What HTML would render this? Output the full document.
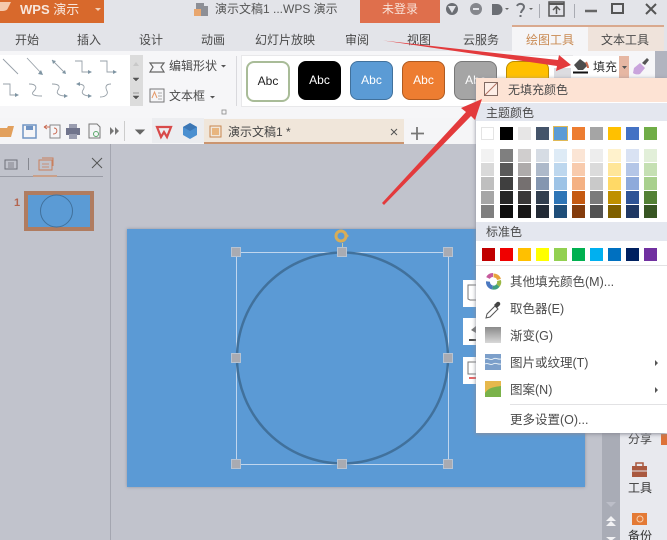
<!DOCTYPE html>
<html><head><meta charset="utf-8"><style>
html,body{margin:0;padding:0}
body{width:667px;height:540px;overflow:hidden;position:relative;background:#c1c3cc;font-family:"Liberation Sans","Noto Sans CJK SC",sans-serif;color:#444}
#w{position:absolute;left:0;top:0;width:667px;height:540px;overflow:hidden;filter:blur(.35px)}
div,span{position:absolute;white-space:nowrap}
.t{font-size:12px;line-height:16px;color:#4a4a4a}
.abc{top:61px;width:41px;height:37px;border-radius:8px;border:1px solid;text-align:center;line-height:37px;font-size:12px;color:#fff}
.m{left:510px;font-size:12.5px;line-height:16px;color:#4c4c4c}
.s{width:13px;height:13px}
svg{position:absolute;left:0;top:0}
</style></head><body><div id="w">
<div style="left:0;top:0;width:667px;height:51px;background:#e3e4e9"></div>
<div style="left:0;top:0;width:104px;height:23px;background:#d8692c"></div>
<div style="top:0;font-size:13px;line-height:19px;color:#f7e6dc;left:20px;font-weight:bold">WPS <span style="position:static;font-weight:normal">演示</span></div>
<div style="left:95px;top:8px;border:3px solid transparent;border-top:3px solid #f3d0b8"></div>
<div class="t" style="left:215px;top:1px;font-size:12px;color:#555">演示文稿1 ...WPS 演示</div>
<div style="left:360px;top:0;width:80px;height:23px;background:#df6f4c;color:#f8e2d8;font-size:12px;line-height:18px;text-align:center">未登录</div>
<!-- tabs -->
<div class="t" style="left:15px;top:32px">开始</div>
<div class="t" style="left:77px;top:32px">插入</div>
<div class="t" style="left:139px;top:32px">设计</div>
<div class="t" style="left:201px;top:32px">动画</div>
<div class="t" style="left:255px;top:32px">幻灯片放映</div>
<div class="t" style="left:345px;top:32px">审阅</div>
<div class="t" style="left:407px;top:32px">视图</div>
<div class="t" style="left:463px;top:32px">云服务</div>
<div style="left:512px;top:25px;width:152px;height:2px;background:#d9a98e"></div>
<div style="left:512px;top:27px;width:76px;height:24px;background:#f5f5f7"></div>
<div style="left:588px;top:27px;width:76px;height:24px;background:#efe3db"></div>
<div class="t" style="left:526px;top:32px;color:#c98a52">绘图工具</div>
<div class="t" style="left:601px;top:32px">文本工具</div>
<!-- ribbon -->
<div style="left:0;top:51px;width:655px;height:67px;background:#f6f6f8"></div>
<div style="left:655px;top:51px;width:12px;height:27px;background:#b1b4bf"></div>
<div style="left:0;top:55px;width:130px;height:51px;background:#fff"></div>
<div style="left:130px;top:55px;width:13px;height:51px;background:#dcdcdc"></div>
<div style="left:241px;top:55px;width:330px;height:50px;background:#fff;border:1px solid #e8e8ea"></div>
<div class="t" style="left:169px;top:58px;font-size:12px">编辑形状</div>
<div class="t" style="left:169px;top:88px;font-size:12px">文本框</div>
<div class="abc" style="left:246px;background:#fff;border:2px solid #a9bc98;width:40px;color:#222">Abc</div>
<div class="abc" style="left:298px;background:#000;border-color:#000">Abc</div>
<div class="abc" style="left:350px;background:#5b9bd5;border-color:#41719c">Abc</div>
<div class="abc" style="left:402px;background:#ed7d31;border-color:#ae5a21">Abc</div>
<div class="abc" style="left:454px;background:#a5a5a5;border-color:#787878">Abc</div>
<div class="abc" style="left:506px;background:#ffc000;border-color:#bc8c00"></div>
<div style="left:554px;top:68px;width:17px;height:10px;background:#dcdce0"></div>
<div style="left:571px;top:56px;width:48px;height:22px;background:#fff"></div>
<div style="left:619px;top:56px;width:10px;height:22px;background:#e6b7a3"></div>
<div class="t" style="left:593px;top:59px;color:#333">填充</div>
<!-- quick bar -->
<div style="left:0;top:118px;width:667px;height:26px;background:#f5f5f7"></div>
<div style="left:152px;top:118px;width:52px;height:25px;background:#ecedf0"></div>
<div style="left:204px;top:119px;width:200px;height:23px;background:#f0e6da;border-bottom:2px solid #cb9570"></div>
<div class="t" style="left:228px;top:124px;color:#444">演示文稿1 *</div>
<!-- left panel -->
<div style="left:110px;top:144px;width:1px;height:396px;background:#a4a6b0"></div>
<div style="left:0;top:176px;width:103px;height:1px;background:#9a9ca6"></div>
<div style="left:33px;top:175px;width:24px;height:2px;background:#c9a08a"></div>
<div style="left:14px;top:196px;font-size:11px;line-height:14px;font-weight:bold;color:#b4654f">1</div>
<div style="left:24px;top:191px;width:62px;height:32px;background:#5b9bd5;border:4px solid #b07c60"></div>
<!-- slide -->
<div style="left:127px;top:229px;width:458px;height:258px;background:#5b9ad5;box-shadow:0 0 3px #8e92a0"></div>
<!-- side buttons -->
<div style="left:463px;top:280px;width:20px;height:27px;background:#fff"></div>
<div style="left:463px;top:318px;width:20px;height:27px;background:#fff"></div>
<div style="left:463px;top:357px;width:20px;height:27px;background:#fff"></div>
<!-- right sidebar -->
<div style="left:602px;top:430px;width:18px;height:110px;background:#a9acb6"></div>
<div style="left:620px;top:430px;width:47px;height:110px;background:#e8e9ee"></div>
<div style="left:661px;top:434px;width:6px;height:11px;background:#dd7238"></div>
<div class="t" style="left:628px;top:431px;color:#444">分享</div>
<div class="t" style="left:628px;top:480px;color:#333">工具</div>
<div class="t" style="left:628px;top:528px;color:#333">备份</div>
<svg width="667" height="540" viewBox="0 0 667 540" fill="none">
<!-- title icons -->
<path d="M0 2h11l-3 6c-1 3-4 3-8 3z" fill="#f5c9ac"/>
<path d="M196 3h8v3h4v10h-12z" fill="#8d8f96"/><rect x="194" y="9" width="7" height="7" fill="#e8a66e"/>
<circle cx="452" cy="9" r="6" fill="#6b6e74"/><path d="M448 6l4 7 4-7z" fill="#e3e4e9"/>
<circle cx="476" cy="9" r="6" fill="#85878d"/><path d="M473 9h6" stroke="#e3e4e9" stroke-width="2"/>
<path d="M492 4h5a5 5 0 0 1 0 11h-5z" fill="#6b6e74"/><path d="M505 8l2 2 2-2z" fill="#666"/>
<path d="M517 6c1-3 7-3 7 1 0 3-3 3-3 6M520.500 15v2" stroke="#6b6e74" stroke-width="2"/><path d="M529 8l2 2 2-2z" fill="#666"/>
<path d="M539.500 4v14M574.500 4v14" stroke="#a9abb2"/>
<rect x="549" y="2" width="15" height="14" stroke="#555" stroke-width="1.500"/><path d="M549 4h15" stroke="#555" stroke-width="2"/><path d="M556.500 14V7M553 10l3.500-3.500 3.500 3.500" stroke="#555" stroke-width="1.500"/>
<path d="M585 11h12" stroke="#666" stroke-width="2.500"/>
<rect x="612" y="4" width="11" height="9" stroke="#555" stroke-width="2"/>
<path d="M646 4l10 10M656 4l-10 10" stroke="#555" stroke-width="2"/>
<!-- line gallery -->
<g stroke="#97a0a8" stroke-width=".9">
<path d="M3 59l15 15M27 58l15 16M52 60l13 13M75 61h7v11h8M100 61h7v11h8"/>
<path d="M3 84h7v11h7M29 84c8 0 8 4 5 7s-2 5 8 5M52 84c8 0 8 3 6 6s0 6 8 6M77 84c8 0 8 3 6 6s0 6 8 6"/>
<path d="M111 84c-7 0-5 5-4 7s0 6-7 6"/>
</g>
<path d="M43 75l-5-1 3-4zM52 60l1 4 3-3zM66 74l-1-4-3 3zM92 72l-4-2v4zM117 72l-4-2v4zM19 95l-4-2v4zM68 96l-4-2v4zM92 96l-4-2v4zM76 84l4-2v4z" fill="#7f95a3"/>
<path d="M133 78l3 3 3-3zM133 93h6M133 96l3 3 3-3z" fill="#555" stroke="#555" stroke-width=".5"/>
<path d="M136 62l-3 4h6z" fill="#c8c8c8"/>
<path d="M150 63h14l-3 4 3 5h-14l3-5z" stroke="#666" stroke-width="1.200"/>
<path d="M221 65l2.500 2.500 2.500-2.500zM210 96l2.500 2.500 2.500-2.500z" fill="#555"/>
<rect x="150" y="89" width="14" height="13" stroke="#777"/><path d="M158 93h4M158 96h4M158 99h4" stroke="#aaa"/>
<path d="M152 98l2.500-6 2.500 6" stroke="#e59a6a"/>
<rect x="222" y="110" width="4" height="4" stroke="#888" stroke-width=".8"/>
<path d="M236.500 56v50" stroke="#d9d9dd"/>
<!-- fill button icon -->
<path d="M574 65l6-6 8 6-5 5h-5z" fill="#4d4d4d"/><path d="M586 62c1 2 2 4 2 6" stroke="#c96c52" stroke-width="2"/><path d="M573 72.500h15" stroke="#111" stroke-width="2"/>
<path d="M622 66l2.500 3 2.500-3z" fill="#555"/>
<path d="M634 68l6-5 5 5-5 6c-3 1-6 0-7-1z" fill="#c9a4dc"/><path d="M642 63l5-5 2 2-4 5z" fill="#555"/>
<!-- quick icons -->
<path d="M-1 128h8l1-2h6l-3 11H-2z" fill="#e2a05d"/>
<rect x="23" y="125" width="13" height="13" stroke="#6f93c3" stroke-width="1.500"/><rect x="26" y="126" width="7" height="4" fill="#6f93c3"/>
<path d="M50 125h10v13H50z" stroke="#888"/><path d="M44 127h6M44 127l3-2M44 127l3 2" stroke="#c96a52"/><path d="M53 134c5 0 5-6 1-6" stroke="#c96a52"/>
<rect x="66" y="128" width="14" height="7" fill="#70748c"/><rect x="69" y="124" width="8" height="4" fill="#9a9db0"/><rect x="69" y="134" width="8" height="5" fill="#9a9db0"/>
<path d="M89 124h8l3 3v11H89z" stroke="#777"/><circle cx="96" cy="134" r="2.500" stroke="#5aa86a"/>
<path d="M110 127l4 4-4 4zM115 127l4 4-4 4z" fill="#777"/>
<path d="M124.500 121v20" stroke="#ccc"/>
<path d="M136 130l4 4 4-4z" fill="#666" stroke="#666"/>
<path d="M157 127h14l-4 10-3-5-3 5z" stroke="#d84a4a" stroke-width="2.200"/>
<path d="M190 123l7 4v8l-7 4-7-4v-8z" fill="#4a8fd0"/><path d="M183 127l7 4 7-4-7-4z" fill="#3b76b4"/>
<rect x="210" y="126" width="11" height="11" stroke="#c9874f"/><rect x="212" y="128" width="7" height="7" fill="#e8b57f"/>
<path d="M391 129l6 6M397 129l-6 6" stroke="#555"/>
<path d="M417 127v13M411 133.500h13" stroke="#777" stroke-width="1.800"/>
<!-- left panel icons -->
<rect x="5" y="160" width="12" height="9" stroke="#6d6f78"/><path d="M8 163h6M8 165h6M8 167h6" stroke="#6d6f78" stroke-width=".8"/>
<path d="M28.500 158v12" stroke="#85878f"/>
<rect x="39" y="160" width="13" height="10" stroke="#c97f5d"/><path d="M42 158h11v8" stroke="#c97f5d"/><path d="M42 164h7M42 167h7" stroke="#c97f5d" stroke-width=".8"/>
<path d="M92 158l10 10M102 158l-10 10" stroke="#555"/>
<circle cx="56.500" cy="211" r="16" stroke="#41719c"/>
<!-- side button icons -->
<path d="M476 285h-8v14l2 1h6" stroke="#777"/>
<path d="M476 326l-5 4 5 3z" fill="#777"/><path d="M469 340h7" stroke="#111" stroke-width="1.500"/>
<path d="M476 362h-8v12h8" stroke="#777"/><path d="M469 378h7" stroke="#d33" stroke-width="1.500"/>
<!-- circle and selection -->
<rect x="236.500" y="252.500" width="212" height="212" stroke="#c0d6ee"/>
<circle cx="342.500" cy="358" r="105.500" stroke="#41719c" stroke-width="2.500"/>
<path d="M342.500 243v9" stroke="#d0c9a0"/>
<circle cx="341" cy="236" r="5" stroke="#d8ad57" stroke-width="3"/><path d="M345 232l4 4-4 3z" fill="#d8ad57"/>
<g fill="#a9abb2" stroke="#b7c3d2">
<rect x="231.500" y="247.500" width="9" height="9"/><rect x="337.500" y="247.500" width="9" height="9"/><rect x="443.500" y="247.500" width="9" height="9"/>
<rect x="231.500" y="353.500" width="9" height="9"/><rect x="443.500" y="353.500" width="9" height="9"/>
<rect x="231.500" y="459.500" width="9" height="9"/><rect x="337.500" y="459.500" width="9" height="9"/><rect x="443.500" y="459.500" width="9" height="9"/>
</g>
<!-- sidebar icons -->
<rect x="632" y="466" width="15" height="11" fill="#a9583f"/><path d="M636 466v-3h7v3" stroke="#a9583f" stroke-width="1.500"/><path d="M632 471h15" stroke="#e8e9ee"/>
<rect x="632" y="513" width="15" height="12" fill="#e47a35"/><circle cx="640" cy="519" r="3" stroke="#f6d0b0"/>
<path d="M606 502l5 5 5-5z" fill="#bcbec8"/><path d="M606 521l5-5 5 5zM606 526l5-5 5 5zM606 537l5 4 5-4z" fill="#f2f2f4"/>
</svg>
<!-- popup -->
<div style="left:476px;top:78px;width:191px;height:355px;background:#fff;box-shadow:0 1px 4px #8a8c96"></div>
<div style="left:476px;top:78px;width:191px;height:24px;background:#fde3d4"></div>
<div style="left:476px;top:103px;width:191px;height:18px;background:#e4e7ef"></div>
<div style="left:476px;top:222px;width:191px;height:19px;background:#e4e7ef"></div>
<div class="t" style="left:508px;top:82px;color:#4a4a4a">无填充颜色</div>
<div class="t" style="left:486px;top:105px;color:#4a4a4a">主题颜色</div>
<div class="t" style="left:486px;top:224px;color:#4a4a4a">标准色</div>
<!-- theme row -->
<div class="s" style="left:481px;top:127px;background:#fff;border:1px solid #e4e4e4;width:11px;height:11px"></div>
<div class="s" style="left:500px;top:127px;background:#000"></div>
<div class="s" style="left:518px;top:127px;background:#e7e6e6"></div>
<div class="s" style="left:536px;top:127px;background:#44546a"></div>
<div class="s" style="left:554px;top:127px;background:#5b9bd5;outline:1px solid #e0b955;outline-offset:0"></div>
<div class="s" style="left:572px;top:127px;background:#ed7d31"></div>
<div class="s" style="left:590px;top:127px;background:#a5a5a5"></div>
<div class="s" style="left:608px;top:127px;background:#ffc000"></div>
<div class="s" style="left:626px;top:127px;background:#4472c4"></div>
<div class="s" style="left:644px;top:127px;background:#70ad47"></div>
<!-- shades -->
<svg width="667" height="540" viewBox="0 0 667 540">
<g>
<rect x="481" y="149" width="13" height="13" fill="#f2f2f2"/><rect x="481" y="163" width="13" height="13" fill="#d9d9d9"/><rect x="481" y="177" width="13" height="13" fill="#bfbfbf"/><rect x="481" y="191" width="13" height="13" fill="#a6a6a6"/><rect x="481" y="205" width="13" height="13" fill="#7f7f7f"/>
<rect x="500" y="149" width="13" height="13" fill="#7f7f7f"/><rect x="500" y="163" width="13" height="13" fill="#595959"/><rect x="500" y="177" width="13" height="13" fill="#3f3f3f"/><rect x="500" y="191" width="13" height="13" fill="#262626"/><rect x="500" y="205" width="13" height="13" fill="#0d0d0d"/>
<rect x="518" y="149" width="13" height="13" fill="#d0cece"/><rect x="518" y="163" width="13" height="13" fill="#aeabab"/><rect x="518" y="177" width="13" height="13" fill="#757070"/><rect x="518" y="191" width="13" height="13" fill="#3a3838"/><rect x="518" y="205" width="13" height="13" fill="#171616"/>
<rect x="536" y="149" width="13" height="13" fill="#d6dce4"/><rect x="536" y="163" width="13" height="13" fill="#adb9ca"/><rect x="536" y="177" width="13" height="13" fill="#8496b0"/><rect x="536" y="191" width="13" height="13" fill="#323f4f"/><rect x="536" y="205" width="13" height="13" fill="#222a35"/>
<rect x="554" y="149" width="13" height="13" fill="#deebf6"/><rect x="554" y="163" width="13" height="13" fill="#bdd7ee"/><rect x="554" y="177" width="13" height="13" fill="#9dc3e6"/><rect x="554" y="191" width="13" height="13" fill="#2e75b6"/><rect x="554" y="205" width="13" height="13" fill="#1f4e79"/>
<rect x="572" y="149" width="13" height="13" fill="#fbe5d5"/><rect x="572" y="163" width="13" height="13" fill="#f8cbad"/><rect x="572" y="177" width="13" height="13" fill="#f4b183"/><rect x="572" y="191" width="13" height="13" fill="#c55a11"/><rect x="572" y="205" width="13" height="13" fill="#843c0c"/>
<rect x="590" y="149" width="13" height="13" fill="#ededed"/><rect x="590" y="163" width="13" height="13" fill="#dbdbdb"/><rect x="590" y="177" width="13" height="13" fill="#c9c9c9"/><rect x="590" y="191" width="13" height="13" fill="#7b7b7b"/><rect x="590" y="205" width="13" height="13" fill="#525252"/>
<rect x="608" y="149" width="13" height="13" fill="#fff2cc"/><rect x="608" y="163" width="13" height="13" fill="#ffe699"/><rect x="608" y="177" width="13" height="13" fill="#ffd966"/><rect x="608" y="191" width="13" height="13" fill="#bf9000"/><rect x="608" y="205" width="13" height="13" fill="#7f6000"/>
<rect x="626" y="149" width="13" height="13" fill="#d9e2f3"/><rect x="626" y="163" width="13" height="13" fill="#b4c6e7"/><rect x="626" y="177" width="13" height="13" fill="#8eaadb"/><rect x="626" y="191" width="13" height="13" fill="#2f5496"/><rect x="626" y="205" width="13" height="13" fill="#1f3864"/>
<rect x="644" y="149" width="13" height="13" fill="#e2efd9"/><rect x="644" y="163" width="13" height="13" fill="#c5e0b3"/><rect x="644" y="177" width="13" height="13" fill="#a8d08d"/><rect x="644" y="191" width="13" height="13" fill="#538135"/><rect x="644" y="205" width="13" height="13" fill="#375623"/>
</g>
<g>
<rect x="482" y="248" width="13" height="13" fill="#c00000"/><rect x="500" y="248" width="13" height="13" fill="#f00000"/><rect x="518" y="248" width="13" height="13" fill="#ffc000"/><rect x="536" y="248" width="13" height="13" fill="#ffff00"/><rect x="554" y="248" width="13" height="13" fill="#92d050"/><rect x="572" y="248" width="13" height="13" fill="#00b050"/><rect x="590" y="248" width="13" height="13" fill="#00b0f0"/><rect x="608" y="248" width="13" height="13" fill="#0070c0"/><rect x="626" y="248" width="13" height="13" fill="#002060"/><rect x="644" y="248" width="13" height="13" fill="#7030a0"/>
</g>
<path d="M476 265.500h191M510 404.500h157" stroke="#e2e2e4"/>
<!-- no fill icon -->
<rect x="484.500" y="82.500" width="13" height="13" fill="#fdeee6" stroke="#7f6a62"/><path d="M485 95l12-12" stroke="#b0705f"/>
<!-- menu icons -->
<g fill="none" stroke-width="4">
<path d="M488 278a5.500 5.500 0 0 1 5-3" stroke="#c65a9c"/><path d="M493.500 275.500a5.500 5.500 0 0 1 5.500 4" stroke="#e8a33c"/><path d="M499 280.500a5.500 5.500 0 0 1-1 5" stroke="#9ab845"/><path d="M498 285.500a5.500 5.500 0 0 1-5.500 2" stroke="#3f9f7e"/><path d="M492.500 287.500a5.500 5.500 0 0 1-4.500-6" stroke="#4a78c0"/>
</g>
<path d="M487 314l8-8 3 3-8 8-4 1z" fill="#fff" stroke="#555"/><path d="M494 305l3-3c2-1 4 1 3 3l-3 3z" fill="#444"/>
<defs><linearGradient id="g1" x1="0" y1="0" x2="0" y2="1"><stop offset="0" stop-color="#8a8a8a"/><stop offset="1" stop-color="#d8d8d8"/></linearGradient></defs>
<rect x="485" y="327" width="16" height="16" fill="url(#g1)"/>
<rect x="485" y="354" width="16" height="16" fill="#7c9fca"/>
<path d="M485 359c3-2 5 2 8 0s5 1 8 0M485 364c3-2 5 2 8 0s5 1 8 0" stroke="#e2ecf4" fill="none"/>
<rect x="485" y="381" width="16" height="16" fill="#e6b84c"/><path d="M485 397v-4c4-6 10-6 16-7v11z" fill="#7ab24a"/>
<path d="M655 360l3 3-3 3zM655 387l3 3-3 3z" fill="#555"/>
<!-- red arrows -->
<path d="M383 40.500L558 60l1-5 12 10-15 6 1-5z" fill="#e33a3c"/>
<path d="M382 203L466 112l-5-4 21-9-7 21-4-4L384 205z" fill="#e33a3c"/>
</svg>
<div class="m" style="top:274px">其他填充颜色(M)...</div>
<div class="m" style="top:301px">取色器(E)</div>
<div class="m" style="top:328px">渐变(G)</div>
<div class="m" style="top:355px">图片或纹理(T)</div>
<div class="m" style="top:382px">图案(N)</div>
<div class="m" style="top:412px">更多设置(O)...</div>
</div></body></html>
